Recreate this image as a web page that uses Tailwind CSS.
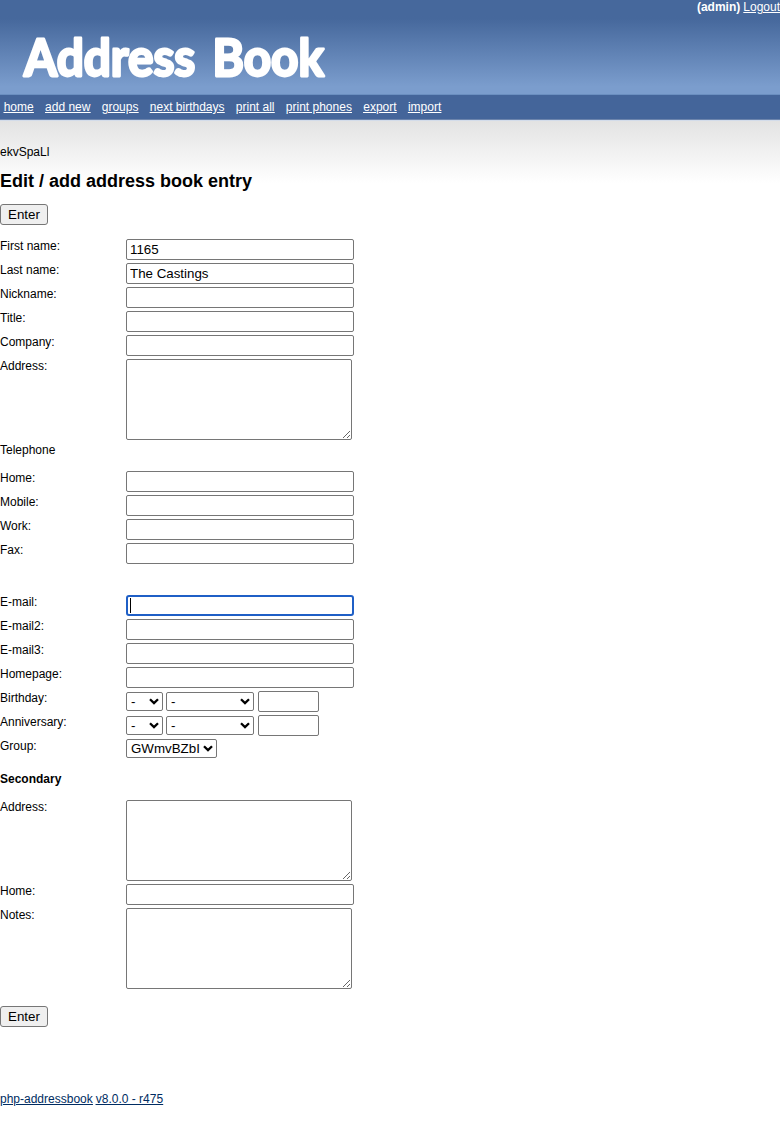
<!DOCTYPE html>
<html lang="en">
<head>
<meta charset="utf-8">
<title>Address Book</title>
<script src="https://cdn.jsdelivr.net/npm/@tailwindcss/browser@4"></script>
</head>
<body class="bg-white font-['Liberation_Sans',Arial,sans-serif] text-xs leading-4 text-black">
<header class="h-[95px] border-b border-[#6b8fc0] bg-linear-to-b from-[#46689c] from-20% to-[#7b9dcd] to-92%">
  <div class="flex h-[14px] justify-end gap-[3px] whitespace-nowrap leading-[14px] text-white"><b>(admin)</b><a href="#" class="underline">Logout</a></div>
  <svg class="block overflow-visible" width="420" height="76" viewBox="0 14 420 76" fill="#fff" stroke="#fff" stroke-width="2.8" stroke-linejoin="round" font-family="Lato, sans-serif" font-weight="700" font-size="51" role="img">
    <text x="24" y="75.5" textLength="300" lengthAdjust="spacingAndGlyphs" word-spacing="6">Address Book</text>
  </svg>
</header>
<nav class="flex h-[25px] gap-[11.34px] border-b border-[#6c84ac] bg-[#44659a] pl-[3.7px] pt-1 text-white underline">
  <a href="#">home</a><a href="#">add new</a><a href="#">groups</a><a href="#">next birthdays</a><a href="#">print all</a><a href="#">print phones</a><a href="#">export</a><a href="#">import</a>
</nav>
<main class="border-t border-[#d3dcea] bg-linear-to-b from-[#e3e3e3] to-white to-[62px] pt-[23px]">
  <p>ekvSpaLl</p>
  <h1 class="mt-[10px] text-lg leading-[22px] font-bold">Edit / add address book entry</h1>
  <form>
    <button type="button" class="mt-3 block h-[21px] w-12 rounded-[3px] border border-[#767676] bg-[#efefef] text-[13.333px] leading-[19px]">Enter</button>
    <div id="names" class="mt-[14px]"></div>
    <p class="-mt-px h-4">Telephone</p>
    <div id="phones" class="mt-[13px]"></div>
    <div id="online" class="mt-7"></div>
    <h2 class="mt-2 h-4 font-bold">Secondary</h2>
    <div id="secondary" class="mt-[13px]"></div>
    <button type="button" class="mt-[14px] block h-[21px] w-12 rounded-[3px] border border-[#767676] bg-[#efefef] text-[13.333px] leading-[19px]">Enter</button>
  </form>
  <footer class="mt-16 flex gap-[3px] pb-5 text-[#002c62] underline"><a href="#">php-addressbook</a><a href="#">v8.0.0 - r475</a></footer>
</main>
<script>
const box = 'block rounded-[2px] border border-[#767676] bg-white text-[13.333px]';
const input = (w, v = '') => `<input class="${box} h-[21px] px-[3px] ${w}" value="${v}">`;
const area = () => `<textarea class="${box} h-[81px] w-[226px] resize p-[2px]"></textarea>`;
const select = (w, v) => `<div class="relative ${w}"><select class="${box} h-[19px] w-full appearance-none pl-1 leading-[17px]"><option>${v}</option></select><svg class="pointer-events-none absolute top-[6px] right-[4px]" width="10" height="7" viewBox="0 0 10 7" fill="none" stroke="#000" stroke-width="2.3"><path d="M1 1.2 5 5.1 9 1.2"/></svg></div>`;
const row = (label, field) => `<div class="flex items-start pb-[3px]"><label class="w-[126px]"><span class="-mt-px block">${label}:</span></label>${field}</div>`;
const full = 'w-[228px]';
const date = () => `<div class="flex h-[21px] items-center">${select('w-[37px]', '-')}<div class="w-[3px]"></div>${select('w-[88px]', '-')}<div class="w-1"></div>${input('w-[61px]')}</div>`;
const focused = `<div class="relative"><input class="block h-[21px] w-[228px] rounded-[3px] border-2 border-[#1f5fc6] bg-white"><i class="absolute top-[3px] left-1 h-[15px] w-px bg-black"></i></div>`;
const fill = (id, rows) => document.getElementById(id).innerHTML = rows.map(r => row(...r)).join('');
fill('names', [['First name', input(full, '1165')], ['Last name', input(full, 'The Castings')], ['Nickname', input(full)], ['Title', input(full)], ['Company', input(full)], ['Address', area()]]);
fill('phones', [['Home', input(full)], ['Mobile', input(full)], ['Work', input(full)], ['Fax', input(full)]]);
fill('online', [['E-mail', focused], ['E-mail2', input(full)], ['E-mail3', input(full)], ['Homepage', input(full)], ['Birthday', date()], ['Anniversary', date()], ['Group', `<div class="h-[21px]">${select('w-[91px]', 'GWmvBZbI')}</div>`]]);
fill('secondary', [['Address', area()], ['Home', input(full)], ['Notes', area()]]);
</script>
</body>
</html>
